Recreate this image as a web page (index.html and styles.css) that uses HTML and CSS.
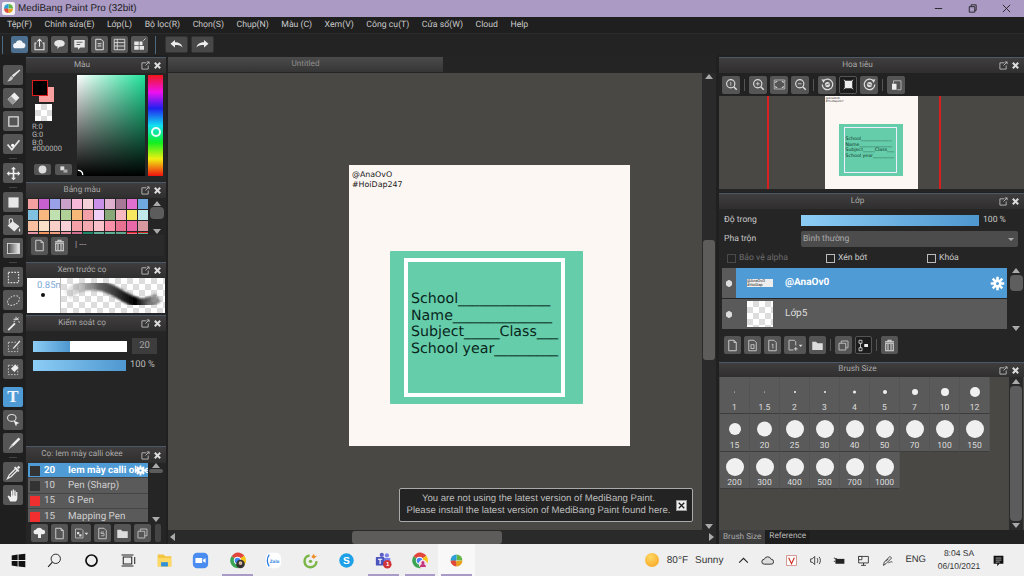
FILE: index.html
```html
<!DOCTYPE html>
<html lang="vi">
<head>
<meta charset="utf-8">
<title>MediBang Paint Pro</title>
<link rel="stylesheet" href="styles.css">
</head>
<body>
<svg class="defs" width="0" height="0">
  <defs>
    <symbol id="pop" viewBox="0 0 10 10"><path d="M6 2H1v7h7V5M5 5l4-4M6.500 1H9v2.500" fill="none" stroke="#bbb" stroke-width="1"/></symbol>
    <symbol id="cls" viewBox="0 0 10 10"><path d="M2 2l6 6M8 2l-6 6" stroke="#ddd" stroke-width="2.200"/></symbol>
    <symbol id="page" viewBox="0 0 20 20"><path d="M5 3h7l3 3v11H5zM12 3v3h3" fill="none" stroke="#ccc" stroke-width="1.300"/></symbol>
    <symbol id="trash" viewBox="0 0 20 20"><path d="M4 5h12M8 5V3h4v2M5 7h10v10H5zM8 8v8M12 8v8" fill="none" stroke="#ddd" stroke-width="1.400"/></symbol>
    <symbol id="folder" viewBox="0 0 20 20"><path d="M3 5h5l2 2h7v9H3z" fill="#ddd"/></symbol>
    <symbol id="copy" viewBox="0 0 20 20"><path d="M4 7h9v9H4zM7 7V4h9v9h-3" fill="none" stroke="#bbb" stroke-width="1.300"/></symbol>
    <symbol id="gear" viewBox="0 0 20 20"><circle cx="10" cy="10" r="5.500" fill="#fff"/><path d="M10 1v18M1 10h18M3.600 3.600l12.800 12.800M16.400 3.600L3.600 16.400" stroke="#fff" stroke-width="3.400"/><circle cx="10" cy="10" r="2" fill="#4f9bd6"/></symbol>
    <symbol id="rot" viewBox="0 0 20 20"><path d="M5 5a7 7 0 1 1-2 5" fill="none" stroke="#ddd" stroke-width="1.700"/><path d="M2 3l5 .5L4.500 8z" fill="#ddd"/><circle cx="10" cy="10" r="3.500" fill="#ddd"/><path d="M7 11l6-2" stroke="#555"/></symbol>
    <symbol id="chrome" viewBox="0 0 20 20"><path d="M10 10L3 5a9 9 0 0 1 15-.5z" fill="#e2453a"/><path d="M10 10l8-5.500A9 9 0 0 1 11 19z" fill="#f5c518"/><path d="M10 10l1 9A9 9 0 0 1 3 5z" fill="#3aa655"/><circle cx="10" cy="10" r="4.300" fill="#fff"/><circle cx="10" cy="10" r="3.300" fill="#4285f4"/></symbol>
    <symbol id="medi" viewBox="0 0 20 20"><path d="M10 3a7 7 0 0 1 7 7h-7z" fill="#63b547"/><path d="M17 10a7 7 0 0 1-7 7l-1-6z" fill="#e8a11f"/><path d="M10 17a7 7 0 0 1-7-7l6-1z" fill="#e04a3a"/><path d="M3 10a7 7 0 0 1 7-7v7z" fill="#2f9fd8"/></symbol>
  </defs>
</svg>

<header class="titlebar">
  <svg class="appicon" viewBox="0 0 20 20"><rect width="20" height="20" rx="3" fill="#f3f3f3"/><use href="#medi"/></svg>
  <span class="apptitle">MediBang Paint Pro (32bit)</span>
  <div class="winctl">
    <svg viewBox="0 0 12 12"><path d="M2 6h8" stroke="#222"/></svg>
    <svg viewBox="0 0 12 12"><path d="M2.500 4h6v6h-6zM4.500 4V2h5.500v6H8.500" fill="none" stroke="#222"/></svg>
    <svg viewBox="0 0 12 12"><path d="M2 2l8 8M10 2l-8 8" stroke="#222"/></svg>
  </div>
</header>

<nav class="menubar">
  <span>Tệp(F)</span><span>Chỉnh sửa(E)</span><span>Lớp(L)</span><span>Bộ lọc(R)</span><span>Chọn(S)</span><span>Chụp(N)</span><span>Màu (C)</span><span>Xem(V)</span><span>Công cụ(T)</span><span>Cửa sổ(W)</span><span>Cloud</span><span>Help</span>
</nav>

<div class="toolbar">
  <i class="grip"></i>
  <button class="tb cloud"><svg viewBox="0 0 20 20"><path d="M5 15a3.500 3.500 0 0 1 0-7 5 5 0 0 1 9.500-.5A3.800 3.800 0 0 1 15 15z" fill="#f2f6fa"/></svg></button>
  <button class="tb"><svg viewBox="0 0 20 20"><path d="M6 8H4v9h12V8h-2M10 13V3M7 6l3-3 3 3" fill="none" stroke="#eee" stroke-width="1.400"/></svg></button>
  <button class="tb"><svg viewBox="0 0 20 20"><path d="M10 4c4.500 0 7 2 7 4.500S14.500 13 10 13l-3 3 .5-3.300C5 12.200 3 10.800 3 8.500 3 6 5.500 4 10 4z" fill="#e8e8e8"/></svg></button>
  <button class="tb"><svg viewBox="0 0 20 20"><path d="M3 4h14v10h-6l-3 3v-3H3z" fill="#e8e8e8"/><path d="M6 7h8M6 10h5" stroke="#555" stroke-width="1.200"/></svg></button>
  <button class="tb"><svg viewBox="0 0 20 20"><path d="M5 3h7l3 3v11H5zM7.500 9h5M7.500 12h5" fill="none" stroke="#e8e8e8" stroke-width="1.300"/></svg></button>
  <button class="tb"><svg viewBox="0 0 20 20"><path d="M3 3h14v14H3zM3 7.500h14M3 12h14M7 3v14" fill="none" stroke="#e8e8e8" stroke-width="1.100"/></svg></button>
  <button class="tb"><svg viewBox="0 0 20 20"><path d="M3 6h6v5H3zM10 6h4v5h-4zM3 12h6v5H3zM10 12h6v5h-6z" fill="#e8e8e8"/><path d="M15 5l3-3" stroke="#e8e8e8"/></svg></button>
  <i class="grip sep"></i>
  <button class="tb wide"><svg viewBox="0 0 20 20"><path d="M2 9l6-5v3c5 0 9 2 10 7-2-3-5-3.500-10-3.500V14z" fill="#eee"/></svg></button>
  <button class="tb wide"><svg viewBox="0 0 20 20"><path d="M18 9l-6-5v3C7 7 3 9 2 14c2-3 5-3.500 10-3.500V14z" fill="#eee"/></svg></button>
</div>

<main class="workspace">
  <aside class="tools">
    <button class="tool"><svg viewBox="0 0 20 20"><path d="M17 3l1 1-8 8-2-2z" fill="#e8e8e8"/><path d="M7.500 10.500l2.200 2.200C8.500 16 5 17 2.500 17c2-1.500 2.500-5 5-6.500z" fill="#c9c9c9"/></svg></button>
    <button class="tool"><svg viewBox="0 0 20 20"><path d="M11 3l6 6-8 8-6-6z" fill="#eee"/><path d="M7 7l6 6-4 4-6-6z" fill="#999"/></svg></button>
    <button class="tool"><svg viewBox="0 0 20 20"><path d="M4.500 4.500h11v11h-11z" fill="none" stroke="#ddd" stroke-width="1.500"/></svg></button>
    <button class="tool"><svg viewBox="0 0 20 20"><path d="M3 10l5 6 9-11" fill="none" stroke="#e6e6e6" stroke-width="2"/><circle cx="9" cy="11" r="1.800" fill="#fff"/></svg></button>
    <i class="tsep"></i>
    <button class="tool"><svg viewBox="0 0 20 20"><path d="M10 2l3 3h-2v4h4V7l3 3-3 3v-2h-4v4h2l-3 3-3-3h2v-4H5v2l-3-3 3-3v2h4V5H7z" fill="#eee"/></svg></button>
    <i class="tsep"></i>
    <button class="tool"><svg viewBox="0 0 20 20"><rect x="4" y="4" width="12" height="12" fill="#e6e6e6"/></svg></button>
    <button class="tool"><svg viewBox="0 0 20 20"><path d="M9 5l8 6-6 6-8-7z" fill="#e6e6e6"/><path d="M5 8V4a2 2 0 0 1 4 0v5" fill="none" stroke="#e6e6e6" stroke-width="1.300"/><path d="M17 13c1 2 1.500 3 .5 4s-2-1-.5-4z" fill="#e6e6e6"/></svg></button>
    <button class="tool"><svg viewBox="0 0 20 20"><defs><linearGradient id="gr"><stop offset="0" stop-color="#444"/><stop offset="1" stop-color="#eee"/></linearGradient></defs><rect x="3" y="4" width="14" height="12" fill="url(#gr)" stroke="#ddd"/></svg></button>
    <i class="tsep"></i>
    <button class="tool"><svg viewBox="0 0 20 20"><path d="M4 4h12v12H4z" fill="none" stroke="#ddd" stroke-width="1.300" stroke-dasharray="2 1.500"/></svg></button>
    <button class="tool"><svg viewBox="0 0 20 20"><ellipse cx="10" cy="10" rx="7.500" ry="5" transform="rotate(-30 10 10)" fill="none" stroke="#ccc" stroke-width="1.200" stroke-dasharray="2 1.500"/></svg></button>
    <button class="tool"><svg viewBox="0 0 20 20"><path d="M3 17l8-8 1.500 1.500-8 8z" fill="#eee"/><path d="M13 2v4M10 5l6 0M16 3l-2 2M10 8l2-1M16 7l1 2" stroke="#eee"/></svg></button>
    <button class="tool"><svg viewBox="0 0 20 20"><path d="M4 5h9M4 5v11h11V9" fill="none" stroke="#ccc" stroke-dasharray="2 1.500"/><path d="M17 3l1 1-7 8-2 1 1-2z" fill="#eee"/></svg></button>
    <button class="tool"><svg viewBox="0 0 20 20"><path d="M4 5h11v11H4z" fill="none" stroke="#ccc" stroke-dasharray="2 1.500"/><path d="M12 4l4 4-5 5-4-4z" fill="#eee"/></svg></button>
    <i class="tgap"></i>
    <button class="tool on"><span class="tglyph">T</span></button>
    <button class="tool"><svg viewBox="0 0 20 20"><ellipse cx="8" cy="7" rx="5" ry="4" fill="none" stroke="#ddd" stroke-width="1.300"/><path d="M10 10l7 3-3 1-1 3z" fill="#eee"/></svg></button>
    <button class="tool"><svg viewBox="0 0 20 20"><path d="M16 3l2 2-8 8-3-1z" fill="#eee"/><path d="M7 12l3 1-6 4z" fill="#ccc"/></svg></button>
    <i class="tsep"></i>
    <button class="tool"><svg viewBox="0 0 20 20"><path d="M13 5l2 2-8 8-4 2 2-4z" fill="none" stroke="#eee" stroke-width="1.500"/><path d="M12 3l5 5-1.500 1.500-5-5zM14 4l2-2 2 2-2 2z" fill="#eee"/></svg></button>
    <button class="tool"><svg viewBox="0 0 20 20"><path d="M6 17l-3-6 1.500-1L7 12V4.500h1.500V10h.5V3h1.500v7h.5V4h1.500v6.500h.5V6h1.500v7c0 2-1 4-2 4z" fill="#f0f0f0"/></svg></button>
  </aside>

  <aside class="leftpanels">
    <section class="panel colorp">
      <header class="phead"><span>Màu</span><svg class="pi"><use href="#pop"/></svg><svg class="pi"><use href="#cls"/></svg></header>
      <div class="colorbody">
        <div class="colorinfo">
          <div class="fgbg"><i class="bgc"></i><i class="fgc"></i></div>
          <i class="check alpha"></i>
          <div class="rgb"><span>R:0</span><span>G:0</span><span>B:0</span><span>#000000</span></div>
          <div class="cbtns"><button class="mini"><svg viewBox="0 0 20 14"><circle cx="10" cy="7" r="5" fill="#ddd"/></svg></button><button class="mini"><svg viewBox="0 0 20 14"><path d="M6 3h5v5H6z" fill="#ddd"/><path d="M10 7h5v4h-5z" fill="#aaa"/></svg></button></div>
        </div>
        <div class="sv"><svg class="svknob" viewBox="0 0 8 8"><path d="M1 1.500a5 5 0 0 1 5.500 5.500" fill="none" stroke="#fff" stroke-width="1.500"/></svg></div>
        <div class="hue"><i class="huering"></i></div>
      </div>
    </section>

    <section class="panel swatchp">
      <header class="phead"><span>Bảng màu</span><svg class="pi"><use href="#pop"/></svg><svg class="pi"><use href="#cls"/></svg></header>
      <div class="swatchrow">
        <div class="swatches">
          <i style="background:#f4a0a0"></i><i style="background:#c860d0"></i><i style="background:#9aa0e8"></i><i style="background:#c8a0c8"></i><i style="background:#f8b8d8"></i><i style="background:#f4d0d8"></i><i style="background:#c890e8"></i><i style="background:#e0b0d0"></i><i style="background:#a87898"></i><i style="background:#e070d0"></i><i style="background:#70a8e0"></i>
          <i style="background:#80c0e0"></i><i style="background:#f8b880"></i><i style="background:#c0e0b0"></i><i style="background:#b0d098"></i><i style="background:#f8b878"></i><i style="background:#f4a0a8"></i><i style="background:#f0d0f8"></i><i style="background:#88a878"></i><i style="background:#f8b8c0"></i><i style="background:#f8e860"></i><i style="background:#c0e8e8"></i>
          <i style="background:#f8c0a0"></i><i style="background:#f8e0c8"></i><i style="background:#f8d0c8"></i><i style="background:#f8d0d8"></i><i style="background:#f8a0a8"></i><i style="background:#f4a8b0"></i><i style="background:#f8c0c8"></i><i style="background:#f890a8"></i><i style="background:#e87090"></i><i style="background:#e868a8"></i><i style="background:#d898a0"></i>
          <i style="background:#e898a8"></i><i style="background:#f09860"></i><i style="background:#f0a080"></i><i style="background:#e890a0"></i><i style="background:#d07090"></i><i style="background:#208868"></i><i style="background:#60b098"></i><i style="background:#60b098"></i><i style="background:#60a890"></i><i class="picked" style="background:#e87890"></i><i class="picked" style="background:#68b8a0"></i>
        </div>
        <div class="vs smallvs"><b class="up"></b><u class="knob"></u><b class="down"></b></div>
      </div>
      <div class="swatchtools">
        <button class="btn"><svg><use href="#page"/></svg></button>
        <button class="btn"><svg><use href="#trash"/></svg></button>
        <span class="dash">| ---</span>
      </div>
    </section>

    <section class="panel previewp">
      <header class="phead"><span>Xem trước cọ</span><svg class="pi"><use href="#pop"/></svg><svg class="pi"><use href="#cls"/></svg></header>
      <div class="preview">
        <div class="dotbox"><span>0.85mm</span><i></i></div>
        <div class="check strokebox">
          <svg viewBox="0 0 105 35" preserveAspectRatio="none"><defs><linearGradient id="st"><stop offset="0" stop-color="#bbb" stop-opacity=".3"/><stop offset=".35" stop-color="#666"/><stop offset=".75" stop-color="#000"/><stop offset=".95" stop-color="#444" stop-opacity=".6"/></linearGradient><filter id="bl"><feGaussianBlur stdDeviation="1"/></filter></defs><path d="M6 17C16 8 26 6 40 8s24 14 38 17c9 1 15-2 20-5" fill="none" stroke="url(#st)" stroke-width="10" filter="url(#bl)"/></svg>
        </div>
      </div>
    </section>

    <section class="panel controlp">
      <header class="phead"><span>Kiểm soát cọ</span><svg class="pi"><use href="#pop"/></svg><svg class="pi"><use href="#cls"/></svg></header>
      <div class="ctlrow first"><div class="bar sizebar"><i></i></div><span class="valbox">20</span></div>
      <div class="ctlrow"><div class="bar fullbar"></div><span class="pct">100 %</span></div>
    </section>

    <section class="panel brushp">
      <header class="phead"><span>Cọ: Iem mày calli okee</span><svg class="pi"><use href="#pop"/></svg><svg class="pi"><use href="#cls"/></svg></header>
      <div class="brushwrap">
        <ul class="brushes">
          <li class="sel"><i class="sw dark"></i><b>20</b><em>Iem mày calli okee</em><svg class="bgear"><use href="#gear"/></svg></li>
          <li><i class="sw dark"></i><b>10</b><em>Pen (Sharp)</em></li>
          <li><i class="sw red"></i><b>15</b><em>G Pen</em></li>
          <li><i class="sw red"></i><b>15</b><em>Mapping Pen</em></li>
        </ul>
        <div class="vs listvs"><b class="up"></b><u class="knob"></u><b class="down"></b></div>
      </div>
      <div class="brushtools">
        <button class="btn"><svg viewBox="0 0 20 20"><path d="M5 11a3 3 0 0 1 0-6 5 5 0 0 1 9 0 3 3 0 0 1 1 6h-3v5H8v-5z" fill="#eee"/></svg></button>
        <button class="btn"><svg><use href="#page"/></svg></button>
        <button class="btn w20"><svg viewBox="0 0 20 20"><path d="M2 4h8l2 2v10H2z" fill="none" stroke="#ccc"/><path d="M4 8h3v3H4zM7 11h3v3H7z" fill="#ddd"/><path d="M14 9h5l-2.500 3z" fill="#ddd"/></svg></button>
        <button class="btn"><svg viewBox="0 0 20 20"><path d="M5 3h7l3 3v11H5z" fill="none" stroke="#ccc" stroke-width="1.200"/><path d="M12 8H8v2h4v3H8" fill="none" stroke="#ccc"/></svg></button>
        <button class="btn"><svg><use href="#folder"/></svg></button>
        <button class="btn"><svg><use href="#copy"/></svg></button>
        <i class="stub"></i>
      </div>
    </section>
  </aside>

  <section class="stage">
    <div class="tabbar"><div class="doctab">Untitled</div></div>
    <div class="stagemid">
      <div class="canvas">
        <div class="paper">
          <p class="stamp">@AnaOvO<br>#HoiDap247</p>
          <div class="card">
            <div class="frame">
              <p class="form">School_____________<br>Name______________<br>Subject_____Class___<br>School year_________</p>
            </div>
          </div>
        </div>
        <div class="notice">
          <p>You are not using the latest version of MediBang Paint.<br>Please install the latest version of MediBang Paint found here.</p>
          <svg class="noticex" viewBox="0 0 12 12"><rect x=".5" y=".5" width="11" height="11" fill="#eee" stroke="#999"/><path d="M3 3l6 6M9 3l-6 6" stroke="#222" stroke-width="1.500"/></svg>
        </div>
      </div>
      <div class="vs stagevs"><b class="up"></b><u class="knob"></u><b class="down"></b></div>
    </div>
    <div class="hscroll"><b class="lf"></b><span class="htrack"><u class="hknob"></u></span><b class="rt"></b></div>
  </section>

  <aside class="rightpanels">
    <section class="panel navp">
      <header class="phead"><span>Hoa tiêu</span><svg class="pi"><use href="#pop"/></svg><svg class="pi"><use href="#cls"/></svg></header>
      <div class="navtools">
        <button class="btn"><svg viewBox="0 0 20 20"><circle cx="9" cy="9" r="5.500" fill="none" stroke="#ddd" stroke-width="1.500"/><path d="M13 13l4 4" stroke="#ddd" stroke-width="2"/><path d="M9 6.500v5" stroke="#ddd"/></svg></button>
        <i class="vsep"></i>
        <button class="btn"><svg viewBox="0 0 20 20"><circle cx="9" cy="9" r="5.500" fill="none" stroke="#ddd" stroke-width="1.500"/><path d="M13 13l4 4" stroke="#ddd" stroke-width="2"/><path d="M6.500 9h5M9 6.500v5" stroke="#ddd"/></svg></button>
        <button class="btn"><svg viewBox="0 0 20 20"><path d="M3 4h14v12H3z" fill="none" stroke="#ccc"/><path d="M5 8V6h2M13 6h2v2M15 12v2h-2M7 14H5v-2" fill="none" stroke="#eee"/></svg></button>
        <button class="btn"><svg viewBox="0 0 20 20"><circle cx="9" cy="9" r="5.500" fill="none" stroke="#ddd" stroke-width="1.500"/><path d="M13 13l4 4" stroke="#ddd" stroke-width="2"/><path d="M6.500 9h5" stroke="#ddd"/></svg></button>
        <i class="vsep"></i>
        <button class="btn"><svg><use href="#rot"/></svg></button>
        <button class="btn dark"><svg viewBox="0 0 20 20"><path d="M3 3l3 2h8l3-2-2 3v8l2 3-3-2H6l-3 2 2-3V6z" fill="#eee"/></svg></button>
        <button class="btn"><svg class="flip"><use href="#rot"/></svg></button>
        <i class="vsep"></i>
        <button class="btn"><svg viewBox="0 0 20 20"><path d="M4 9h6v8H4z" fill="#eee"/><path d="M11 5h5v12h-5M6 9V5h5" fill="none" stroke="#ccc"/></svg></button>
      </div>
      <div class="navview">
        <i class="redline l"></i>
        <div class="minipaper">
          <p class="ministamp">@AnaOvO<br>#HoiDap247</p>
          <div class="minicard"><div class="miniframe"><p>School_____________<br>Name______________<br>Subject_____Class___<br>School year_________</p></div></div>
        </div>
        <i class="redline r"></i>
      </div>
    </section>

    <section class="panel layerp">
      <header class="phead"><span>Lớp</span><svg class="pi"><use href="#pop"/></svg><svg class="pi"><use href="#cls"/></svg></header>
      <div class="lrow opac"><label>Độ trong</label><div class="bar lbar"></div><span>100 %</span></div>
      <div class="lrow blend"><label>Pha trộn</label><div class="select">Bình thường<i></i></div></div>
      <div class="checks"><span class="dim"><i></i>Bảo vệ alpha</span><span class="xen"><i></i>Xén bớt</span><span class="khoa"><i></i>Khóa</span></div>
      <div class="layerwrap">
        <ul class="layers">
          <li class="sel"><i class="eye"></i><div class="lmain"><span class="thumb stripthumb"><em>@AnaOvO #HoiDap</em></span><b>@AnaOv0</b><svg class="lgear"><use href="#gear"/></svg></div></li>
          <li><i class="eye"></i><div class="lmain"><span class="thumb check"></span><span>Lớp5</span></div></li>
        </ul>
        <div class="vs layervs"><b class="up"></b><u class="knob"></u><b class="down"></b></div>
      </div>
      <div class="layertools">
        <button class="btn"><svg><use href="#page"/></svg></button>
        <button class="btn"><svg viewBox="0 0 20 20"><path d="M5 3h7l3 3v11H5z" fill="none" stroke="#ccc" stroke-width="1.200"/><rect x="8" y="9" width="4" height="5" fill="none" stroke="#ddd"/></svg></button>
        <button class="btn"><svg viewBox="0 0 20 20"><path d="M5 3h7l3 3v11H5z" fill="none" stroke="#ccc" stroke-width="1.200"/><path d="M9 9l1.500-1v6" fill="none" stroke="#ddd"/></svg></button>
        <button class="btn w22"><svg viewBox="0 0 22 20"><path d="M3 3h7l2 2v5M3 3v13h6" fill="none" stroke="#ccc" stroke-width="1.200"/><path d="M12 12v5M9.500 14.500h5" stroke="#eee"/><path d="M16 9h5l-2.500 3z" fill="#ddd"/></svg></button>
        <button class="btn"><svg><use href="#folder"/></svg></button>
        <i class="vsep"></i>
        <button class="btn"><svg><use href="#copy"/></svg></button>
        <button class="btn dark"><svg viewBox="0 0 20 20"><path d="M4 3h4v4H4zM4 13h4v4H4z" fill="none" stroke="#eee"/><path d="M11 8h5v4h-5z" fill="#eee"/><path d="M6 7v6" stroke="#eee"/></svg></button>
        <i class="vsep"></i>
        <button class="btn"><svg><use href="#trash"/></svg></button>
      </div>
    </section>

    <section class="panel sizep">
      <header class="phead"><span>Brush Size</span><svg class="pi"><use href="#pop"/></svg><svg class="pi"><use href="#cls"/></svg></header>
      <div class="sizebody">
        <div class="sizes">
          <div><i class="d1"></i><span>1</span></div><div><i class="d1"></i><span>1.5</span></div><div><i class="d2"></i><span>2</span></div><div><i class="d2"></i><span>3</span></div><div><i class="d3"></i><span>4</span></div><div><i class="d4"></i><span>5</span></div><div><i class="d6"></i><span>7</span></div><div><i class="d8"></i><span>10</span></div><div><i class="d10"></i><span>12</span></div>
          <div><i class="d11"></i><span>15</span></div><div><i class="d15"></i><span>20</span></div><div><i class="d18"></i><span>25</span></div><div><i class="d18"></i><span>30</span></div><div><i class="d18"></i><span>40</span></div><div><i class="d18"></i><span>50</span></div><div><i class="d18"></i><span>70</span></div><div><i class="d18"></i><span>100</span></div><div><i class="d18"></i><span>150</span></div>
          <div><i class="d18"></i><span>200</span></div><div><i class="d18"></i><span>300</span></div><div><i class="d18"></i><span>400</span></div><div><i class="d18"></i><span>500</span></div><div><i class="d18"></i><span>700</span></div><div><i class="d18"></i><span>1000</span></div>
        </div>
        <div class="vs sizevs"><b class="up"></b><u class="knob"></u><b class="down"></b></div>
      </div>
      <div class="sizetabs"><span class="tabon">Brush Size</span><span class="taboff">Reference</span></div>
    </section>
  </aside>
</main>

<footer class="taskbar">
  <div class="tasks">
    <span class="ti"><svg viewBox="0 0 20 20"><path d="M2 4l7-1v6.500H2zM10 2.800L18 2v7.500h-8zM2 10.500h7V17l-7-1zM10 10.500h8V18l-8-1z" fill="#111"/></svg></span>
    <span class="ti"><svg viewBox="0 0 20 20"><circle cx="11.500" cy="8" r="5.500" fill="none" stroke="#222" stroke-width="1.100"/><path d="M7.500 12l-5 5.500" stroke="#222" stroke-width="1.300"/></svg></span>
    <span class="ti"><svg viewBox="0 0 20 20"><circle cx="10" cy="10" r="6.500" fill="none" stroke="#111" stroke-width="2"/></svg></span>
    <span class="ti"><svg viewBox="0 0 20 20"><path d="M5 6h10v8H5zM3 3.500h14M3 16.500h14M18.500 6v8" fill="none" stroke="#222" stroke-width="1.200"/></svg></span>
    <span class="ti"><svg viewBox="0 0 20 20"><path d="M2 3h7l2 2h7v12H2z" fill="#f4c542"/><path d="M2 7h16v10H2z" fill="#ffd966"/><path d="M6 12h8v5H6z" fill="#2f8fd8"/></svg></span>
    <span class="ti"><svg viewBox="0 0 20 20"><rect x="1" y="1" width="18" height="18" rx="5" fill="#4a8cf0"/><path d="M4 7h8v6H4zM13 9l3-2v6l-3-2z" fill="#fff"/></svg></span>
    <span class="ti under"><svg viewBox="0 0 20 20"><use href="#chrome"/><circle cx="13.500" cy="14" r="5" fill="#333"/><circle cx="13.500" cy="13" r="2.200" fill="#d8b8a0"/></svg></span>
    <span class="ti"><svg viewBox="0 0 20 20"><rect x="1" y="1" width="18" height="18" rx="6" fill="#fff"/><path d="M5 3C2 7 2 13 5 17" fill="none" stroke="#2a7de1" stroke-width="1.500"/><text x="5.500" y="12.500" class="zalo">Zalo</text></svg></span>
    <span class="ti"><svg viewBox="0 0 20 20"><path d="M9 4a7 7 0 1 0 8 7" fill="none" stroke="#7ab648" stroke-width="3"/><circle cx="10" cy="11" r="2" fill="#7ab648"/><path d="M11 6l3-4 1 3 3-1-4 4z" fill="#f08a24"/></svg></span>
    <span class="ti"><svg viewBox="0 0 20 20"><circle cx="10" cy="10" r="8.500" fill="#1ea0e6"/><text x="6" y="14.500" class="skype">S</text></svg></span>
    <span class="ti under"><svg viewBox="0 0 20 20"><circle cx="14" cy="4" r="2.500" fill="#7b83eb"/><circle cx="8" cy="3.500" r="2.500" fill="#5b5fc7"/><path d="M6 7h12v7a4 4 0 0 1-8 0z" fill="#7b83eb"/><rect x="1" y="6" width="10" height="10" rx="1" fill="#4b53bc"/><path d="M3.500 8.500h5M6 8.500V14" stroke="#fff" stroke-width="1.400"/><circle cx="14.500" cy="14.500" r="5" fill="#d13438"/><text x="13" y="17" class="badge1">1</text></svg></span>
    <span class="ti under"><svg viewBox="0 0 20 20"><use href="#chrome"/><circle cx="14" cy="14" r="5" fill="#f3e3ec"/><circle cx="14" cy="12.500" r="1.800" fill="#c2347a"/><path d="M10.500 17.500a3.500 3.500 0 0 1 7 0z" fill="#c2347a"/></svg></span>
    <span class="ti under active"><svg viewBox="0 0 20 20"><use href="#medi"/></svg></span>
  </div>
  <div class="tray">
    <span class="sun"></span>
    <span class="weather">80°F</span><span class="weather sunny">Sunny</span>
    <svg class="tr chev" viewBox="0 0 12 12"><path d="M2 8l4-4 4 4" fill="none" stroke="#222"/></svg>
    <svg class="tr" viewBox="0 0 16 16"><path d="M4 12.500a3 3 0 0 1 0-6 4.500 4.500 0 0 1 8.500 0 3 3 0 0 1 0 6z" fill="#ddd" stroke="#333" stroke-width="1.200"/></svg>
    <svg class="tr" viewBox="0 0 16 16"><rect x="2" y="2" width="12" height="12" fill="#fff" stroke="#c9847c"/><path d="M4.500 4.500L8 12l3.500-7.500" fill="none" stroke="#d12c20" stroke-width="1.400"/></svg>
    <svg class="tr" viewBox="0 0 16 16"><path d="M2 6h2l3-3v10l-3-3H2z" fill="none" stroke="#222"/><path d="M10 5c1 2 1 4 0 6M12.500 3.500c2 3 2 6 0 9" fill="none" stroke="#222"/></svg>
    <svg class="tr" viewBox="0 0 16 16"><rect x="3" y="6" width="11" height="6" fill="#222"/><path d="M1 5l4 1M1 9h2" stroke="#222"/></svg>
    <svg class="tr" viewBox="0 0 16 16"><path d="M2 3h12v8H2zM8 11v3M5 14h6" fill="none" stroke="#222"/><path d="M2 3h4v4H2z" fill="#fff" stroke="#222"/></svg>
    <svg class="tr" viewBox="0 0 16 16"><path d="M3 14l1-4 7-7 2 2-7 7zM6 9l3-3M9 11c2-1 4-2 5-1" fill="none" stroke="#222"/></svg>
    <span class="eng">ENG</span>
    <span class="clock">8:04 SA<br>06/10/2021</span>
    <svg class="tr note" viewBox="0 0 16 16"><path d="M2 2h12v10H9l-2.500 3V12H2z" fill="#111"/><path d="M4.500 5h7M4.500 7.500h7M4.500 10h5" stroke="#eee" stroke-width=".8"/></svg>
  </div>
</footer>
</body>
</html>
```

FILE: styles.css
```css
* { box-sizing: border-box; }
html, body { margin: 0; padding: 0; }
body {
  width: 1024px; height: 576px; overflow: hidden;
  display: flex; flex-direction: column;
  background: #1f1f1f; color: #c9c9c9;
  font: 9px/1.2 "Liberation Sans", Arial, sans-serif;
  text-rendering: geometricPrecision;
}
p, ul { margin: 0; padding: 0; list-style: none; }
i, em, u { display: block; font-style: normal; text-decoration: none; }
button { margin: 0; padding: 0; border: 0; font: inherit; }
.defs { position: absolute; }

/* window chrome */
.titlebar { height: 17px; flex: none; display: flex; align-items: center; background: #aa9ac4; color: #1c1c1c; }
.appicon { width: 13px; height: 13px; margin-left: 2px; }
.apptitle { margin-left: 3px; font-size: 9.900px; }
.winctl { margin-left: auto; display: flex; gap: 23px; padding-right: 12px; }
.winctl svg { width: 11px; height: 11px; }
.menubar { height: 16px; flex: none; display: flex; align-items: center; padding-left: 7px; gap: 12.500px; background: #1f1f1f; font: 8.700px "Roboto", sans-serif; white-space: nowrap; }
.toolbar { height: 22px; flex: none; display: flex; align-items: center; gap: 3px; padding-left: 2px; background: #232323; border-top: 1px solid #2c2c2c; }
.grip { width: 1px; height: 18px; margin-right: 5px; background: #4d6a80; }
.grip.sep { margin: 0 6px 0 4px; }
.tb { width: 17px; height: 17px; background: #555; border-radius: 2px; display: flex; align-items: center; justify-content: center; }
.tb svg { width: 15px; height: 15px; }
.tb.cloud { background: #4d6f8f; }
.tb.wide { width: 23px; background: #484848; border: 1px solid #333; }

.workspace { flex: 1; min-height: 0; display: flex; background: #202020; }

/* tool strip */
.tools { width: 26px; flex: none; display: flex; flex-direction: column; align-items: center; padding: 10px 0 0 0; gap: 3px; background: #1f1f1f; }
.tool { width: 20px; height: 20px; flex: none; background: #555; border-radius: 2px; display: flex; align-items: center; justify-content: center; }
.tool svg { width: 17px; height: 17px; }
.tool.on { background: #4f9bd6; }
.tglyph { font: bold 17px/20px "Liberation Serif", serif; color: #eef5fb; }
.tsep { width: 8px; height: 1px; margin: 1px 0; background: #444; flex: none; }
.tgap { height: 2px; flex: none; }

/* panels */
.panel { background: #252525; border-top: 1px solid #4a5a68; font-family: "Roboto", sans-serif; font-size: 8.600px; }
.phead { height: 15px; display: flex; align-items: center; gap: 3px; padding-right: 4px; background: linear-gradient(#3f3d3d, #302f2f); color: #aaa; font-size: 8.200px; }
.phead span { flex: 1; text-align: center; }
.pi { width: 9px; height: 9px; flex: none; }

.leftpanels { width: 140px; flex: none; display: flex; flex-direction: column; margin-top: 2px; }
.colorp { height: 125px; flex: none; }
.colorbody { display: flex; padding: 2px 3px 0 0; }
.colorinfo { width: 51px; flex: none; padding: 5px 0 0 6px; display: flex; flex-direction: column; }
.fgbg { position: relative; height: 22px; }
.fgc { position: absolute; left: 0; top: 0; width: 16px; height: 16px; background: #000; border: 1px solid #d81e1e; }
.bgc { position: absolute; left: 7px; top: 7px; width: 15px; height: 15px; background: #f8a0a0; }
.check { background-color: #fff; background-image: linear-gradient(45deg, #ddd 25%, transparent 25%, transparent 75%, #ddd 75%), linear-gradient(45deg, #ddd 25%, transparent 25%, transparent 75%, #ddd 75%); background-size: 12px 12px; background-position: 0 0, 6px 6px; }
.alpha { width: 17px; height: 17px; margin: 2px 0 0 3px; }
.rgb { display: flex; flex-direction: column; margin-top: 2px; font-size: 7.500px; line-height: 8px; color: #b5b5b5; }
.rgb span:nth-child(3) { height: 6px; overflow: hidden; }
.cbtns { display: flex; gap: 4px; margin: 11px 0 0 2px; }
.mini { width: 17px; height: 11px; background: #555; border-radius: 2px; }
.mini svg { width: 17px; height: 11px; display: block; }
.sv { position: relative; width: 68px; height: 101px; background: linear-gradient(transparent, #000), linear-gradient(90deg, #fff, #1fe39a); }
.svknob { position: absolute; left: 0; bottom: 0; width: 7px; height: 7px; }
.hue { position: relative; width: 15px; height: 101px; margin-left: 3px; background: linear-gradient(#f01818, #f010f0 17%, #2020f0 33%, #10e0f0 50%, #10f020 67%, #f0f010 83%, #f01010); }
.huering { position: absolute; left: 3px; top: 52px; width: 10px; height: 10px; border: 2px solid #e8fff8; border-radius: 50%; }

.swatchp { height: 80px; flex: none; overflow: hidden; }
.swatchrow { display: flex; height: 36px; padding: 1px 0 0 2px; overflow: hidden; }
.swatches { display: grid; grid-template-columns: repeat(11, 10px); grid-auto-rows: 10px; gap: 1px; width: 120px; }
.swatches i { width: 10px; height: 10px; }
.swatches .picked { box-shadow: inset 0 1px 0 #d81e1e; }
.vs { display: flex; flex-direction: column; align-items: center; justify-content: flex-start; }
.vs .up { width: 0; height: 0; flex: none; border: 4px solid transparent; border-top: 0; border-bottom: 5px solid #aaa; }
.vs .down { width: 0; height: 0; flex: none; margin-top: auto; border: 4px solid transparent; border-bottom: 0; border-top: 5px solid #aaa; }
.vs .knob { width: 100%; flex: none; background: #5c5c5c; border-radius: 4px; }
.smallvs { width: 14px; margin-left: 2px; padding-top: 2px; }
.smallvs .knob { height: 12px; margin-top: 1px; }
.swatchtools { display: flex; align-items: center; gap: 3px; margin: 1px 2px 0; padding: 1px 3px; height: 21px; background: #2a2a2a; }
.btn { width: 17px; height: 18px; background: #555; border-radius: 2px; display: flex; align-items: center; justify-content: center; flex: none; }
.btn svg { width: 15px; height: 15px; }
.btn.dark { background: #1c1c1c; border: 1px solid #555; }
.btn.w20 { width: 20px; }
.btn.w22 { width: 22px; }
.btn.w22 svg { width: 18px; }
.flip { transform: scaleX(-1); }
.dash { margin-left: 4px; color: #aaa; }

.previewp { height: 53px; flex: none; }
.preview { display: flex; height: 35px; margin: 0 1px; }
.dotbox { position: relative; width: 34px; flex: none; background: #fff; overflow: hidden; border-right: 1px solid #bbb; }
.dotbox span { position: absolute; left: 10px; top: 2px; color: #7aa8d8; white-space: nowrap; font-size: 9.500px; }
.dotbox i { position: absolute; left: 14px; top: 15px; width: 4px; height: 4px; background: #111; border-radius: 50%; }
.strokebox { flex: 1; }
.strokebox svg { display: block; width: 100%; height: 100%; }

.controlp { height: 131px; flex: none; }
.ctlrow { display: flex; align-items: center; padding-left: 7px; height: 16px; }
.ctlrow.first { margin-top: 7px; margin-bottom: 3px; }
.bar { height: 11px; background: linear-gradient(90deg, #8ccdf6, #4e97cf); }
.sizebar { width: 94px; background: #fff; }
.sizebar i { width: 37px; height: 100%; background: linear-gradient(90deg, #8ccdf6, #4e97cf); }
.valbox { width: 25px; height: 16px; margin-left: 5px; background: #3d3d3d; text-align: center; line-height: 16px; color: #aaa; font-size: 9.500px; }
.fullbar { width: 93px; }
.pct { margin-left: 4px; color: #bbb; font-size: 9.300px; }

.brushp { flex: 1; min-height: 0; }
.brushp .phead { height: 16px; }
.brushwrap { display: flex; padding-left: 2px; height: 59px; }
.brushes { width: 120px; overflow: hidden; }
.brushes li { position: relative; display: flex; align-items: center; height: 15.300px; padding-top: 1px; background: #5a5a5a; border-bottom: 1px solid #444; color: #d0d0d0; white-space: nowrap; overflow: hidden; }
.brushes li.sel { background: #4f9bd6; color: #fff; font-weight: bold; }
.brushes .sw { width: 10px; height: 10px; margin-left: 2px; flex: none; }
.sw.dark { background: #333; }
.sw.red { background: #f22f2f; }
.brushes b { width: 28px; padding-left: 4px; flex: none; font-weight: inherit; font-size: 9.800px; }
.brushes em { flex: none; font-size: 9.800px; }
.bgear { position: absolute; right: 2px; top: 2px; width: 11px; height: 11px; }
.listvs { width: 14px; margin-left: 1px; }
.listvs .knob { height: 4px; margin-top: 1px; }
.brushtools { display: flex; gap: 3px; padding: 2px 0 0 5px; }
.stub { width: 6px; height: 18px; background: #444; border-radius: 2px; margin-left: 1px; }

/* stage */
.stage { flex: 1; min-width: 0; display: flex; flex-direction: column; margin: 0 3px 0 2px; }
.tabbar { height: 18px; flex: none; padding-top: 2px; background: #242424; }
.doctab { width: 275px; height: 15px; text-align: center; line-height: 15px; color: #8e8e8e; background: linear-gradient(#4b4b4b, #353535); font-family: "Roboto", sans-serif; font-size: 8.200px; }
.stagemid { flex: 1; min-height: 0; display: flex; }
.canvas { position: relative; flex: 1; background: #4a4845; overflow: hidden; }
.paper { position: absolute; left: 181px; top: 92px; width: 281px; height: 281px; background: #fdf7f4; }
.stamp { position: absolute; left: 3px; top: 5px; font: 7.900px/9.500px "DejaVu Sans", sans-serif; color: #222; }
.card { position: absolute; left: 41px; top: 86px; width: 193px; height: 153px; background: #66cdaa; border-radius: 1px; }
.frame { position: absolute; left: 14px; top: 7px; width: 161px; height: 139px; border: 4px solid #fff; }
.form { position: absolute; left: 3px; top: 29px; font: 14.200px/16.600px "DejaVu Sans", sans-serif; color: #08251c; white-space: nowrap; }
.notice { position: absolute; left: 231px; top: 415px; width: 294px; height: 34px; display: flex; align-items: center; background: #232323; border: 1px solid #aaa; border-radius: 2px; }
.notice p { flex: 1; padding-left: 6px; text-align: center; font-size: 9.600px; line-height: 12px; color: #bdbdbd; }
.noticex { width: 11px; height: 11px; margin: 0 5px; flex: none; }
.stagevs { width: 14px; flex: none; background: #2a2a2a; padding: 1px 0; }
.stagevs .knob { height: 120px; margin-top: 161px; border-radius: 3px; background: #5e5c5b; width: 12px; }
.hscroll { height: 14px; flex: none; display: flex; align-items: center; background: #2a2a2a; }
.hscroll .lf { width: 0; height: 0; margin-left: 2px; border: 4px solid transparent; border-left: 0; border-right: 5px solid #aaa; }
.hscroll .rt { width: 0; height: 0; margin-right: 2px; border: 4px solid transparent; border-right: 0; border-left: 5px solid #aaa; }
.htrack { flex: 1; padding-left: 177px; }
.hknob { width: 150px; height: 13px; background: #5e5c5b; border-radius: 3px; }

/* right */
.rightpanels { width: 305px; flex: none; display: flex; flex-direction: column; margin-top: 2px; }
.navp { height: 135px; flex: none; }
.navtools { display: flex; align-items: center; gap: 3px; height: 23px; padding-left: 3px; background: #222; }
.navtools .btn { width: 18px; }
.vsep { width: 1px; height: 12px; margin: 0 1px; background: #555; flex: none; }
.navview { display: flex; justify-content: center; align-items: stretch; height: 93px; background: #4a4845; position: relative; }
.redline { position: absolute; top: 0; bottom: 0; width: 2px; background: #d82020; }
.redline.l { left: 48px; }
.redline.r { left: 220px; }
.minipaper { position: relative; width: 93px; height: 93px; margin-left: -1px; background: #fdf7f4; }
.ministamp { position: absolute; left: 1px; top: 1px; font: 2.800px/3.300px "DejaVu Sans", sans-serif; color: #333; }
.minicard { position: absolute; left: 14px; top: 28px; width: 64px; height: 52px; background: #66cdaa; }
.miniframe { position: absolute; left: 5px; top: 3px; width: 53px; height: 46px; border: 1px solid #eef; }
.miniframe p { position: absolute; left: 1px; top: 9px; font: 4.700px/5.500px "DejaVu Sans", sans-serif; color: #0d3327; white-space: nowrap; }

.layerp { height: 169px; flex: none; margin-top: 1px; }
.lrow { display: flex; align-items: center; padding-left: 5px; }
.lrow label { width: 77px; flex: none; }
.opac { margin-top: 5px; height: 12px; }
.lbar { width: 178px; flex: none; margin-right: 4px; }
.blend { margin-top: 5px; height: 16px; }
.select { position: relative; width: 217px; height: 16px; padding-left: 2px; line-height: 16px; background: #4c4c4c; color: #aaa; border-radius: 2px; }
.select i { position: absolute; right: 4px; top: 7px; border: 3px solid transparent; border-top: 3px solid #aaa; }
.checks { display: flex; height: 10px; margin-top: 6px; padding-left: 8px; line-height: 10px; }
.checks span { display: flex; align-items: center; gap: 3px; }
.checks i { width: 9px; height: 9px; border: 1px solid #bbb; }
.checks .dim { width: 99px; color: #6c6c6c; }
.checks .dim i { border-color: #4a4a4a; }
.checks .xen { width: 101px; }
.layerwrap { display: flex; padding-left: 3px; margin-top: 5px; height: 63px; }
.layers { width: 285px; overflow: hidden; }
.layers li { display: flex; height: 30px; margin-bottom: 1px; background: #5a5a5a; align-items: center; }
.eye { width: 14px; flex: none; height: 7px; margin-left: 3px; margin-right: -3px; background: radial-gradient(circle at 4px 3.500px, #ddd 3px, transparent 3.500px); }
.lmain { flex: 1; height: 100%; display: flex; align-items: center; padding-left: 11px; gap: 12px; font-size: 10px; color: #ddd; }
.layers li.sel .lmain { background: #4f9bd6; color: #fff; }
.lmain b { font-size: 10px; }
.thumb { width: 26px; height: 26px; flex: none; display: block; }
.stripthumb { position: relative; }
.stripthumb em { position: absolute; top: 9px; left: 0; width: 26px; height: 8px; overflow: hidden; background: #eee; color: #222; font-size: 4px; line-height: 4px; }
.lgear { margin-left: auto; margin-right: 2px; width: 15px; height: 15px; }
.layervs { width: 14px; margin-left: 2px; gap: 2px; }
.layervs .knob { height: 16px; width: 13px; background: #5e5e5e; }
.layertools { display: flex; align-items: center; gap: 3px; padding-left: 5px; margin-top: 5px; }

.sizep { flex: 1; min-height: 0; display: flex; flex-direction: column; }
.sizep .phead { height: 14px; flex: none; }
.sizebody { flex: 1; min-height: 0; display: flex; background: #4a4845; }
.sizes { width: 270px; padding-left: 1px; display: grid; grid-template-columns: repeat(9, 30px); grid-auto-rows: 37.300px; align-content: start; }
.sizes div { position: relative; display: flex; flex-direction: column; align-items: center; background: #5a5a5a; border-bottom: 1px solid #3d3d3d; border-right: 1px solid #545454; }
.sizes i { position: absolute; top: 15px; background: #f0f0f0; border-radius: 50%; transform: translateY(-50%); }
.sizes span { position: absolute; bottom: 0; line-height: 10px; font-size: 8.500px; color: #ddd; }
.d1 { width: 1px; height: 1px; }
.d2 { width: 2px; height: 2px; }
.d3 { width: 3px; height: 3px; }
.d4 { width: 4px; height: 4px; }
.d6 { width: 6px; height: 6px; }
.d8 { width: 8px; height: 8px; }
.d10 { width: 10px; height: 10px; }
.d11 { width: 12px; height: 12px; }
.d15 { width: 15px; height: 15px; }
.d18 { width: 18px; height: 18px; }
.sizevs { width: 14px; margin-left: auto; margin-right: 1px; background: #2a2a2a; padding: 2px 0; }
.sizevs .knob { flex: 1 1 0; width: 12px; margin: 2px 0; }
.sizevs .down { margin-top: 0; }
.sizetabs { height: 14px; flex: none; display: flex; align-items: center; background: #222; font-size: 8.200px; }
.tabon { padding: 0 4px; height: 100%; line-height: 15px; background: #3d3d3d; color: #aaa; }
.taboff { padding: 0 4px; height: 100%; line-height: 12px; background: #1e1e1e; color: #bbb; }

/* taskbar */
.taskbar { height: 32px; flex: none; display: flex; justify-content: space-between; background: #efefef; color: #222; }
.tasks { display: flex; }
.ti { position: relative; width: 36.500px; height: 32px; display: flex; align-items: center; justify-content: center; }
.ti svg { width: 17px; height: 17px; }
.ti.under::after { content: ""; position: absolute; left: 3px; right: 3px; bottom: 0; height: 2px; background: #a99bc8; }
.ti.active { background: #f8f8f8; }
.zalo { font: bold 5.500px "Liberation Sans", sans-serif; fill: #2a7de1; }
.skype { font: bold 12px "Liberation Sans", sans-serif; fill: #fff; }
.badge1 { font: bold 7px "Liberation Sans", sans-serif; fill: #fff; }
.tray { display: flex; align-items: center; padding-right: 19px; }
.sun { width: 14px; height: 14px; border-radius: 50%; background: radial-gradient(circle at 40% 30%, #ffd860, #f5a020); margin-right: 8px; }
.weather { font: 10px "Liberation Sans", sans-serif; color: #333; margin-right: 7px; }
.sunny { margin-right: 14px; }
.tr { width: 13px; height: 13px; margin-right: 11px; flex: none; }
.eng { margin: 0 8px 0 0; font-size: 9.500px; color: #333; }
.clock { width: 50px; text-align: center; font-size: 8.500px; line-height: 13px; color: #333; margin-right: 8px; }
.note { margin-right: 0; }
```
